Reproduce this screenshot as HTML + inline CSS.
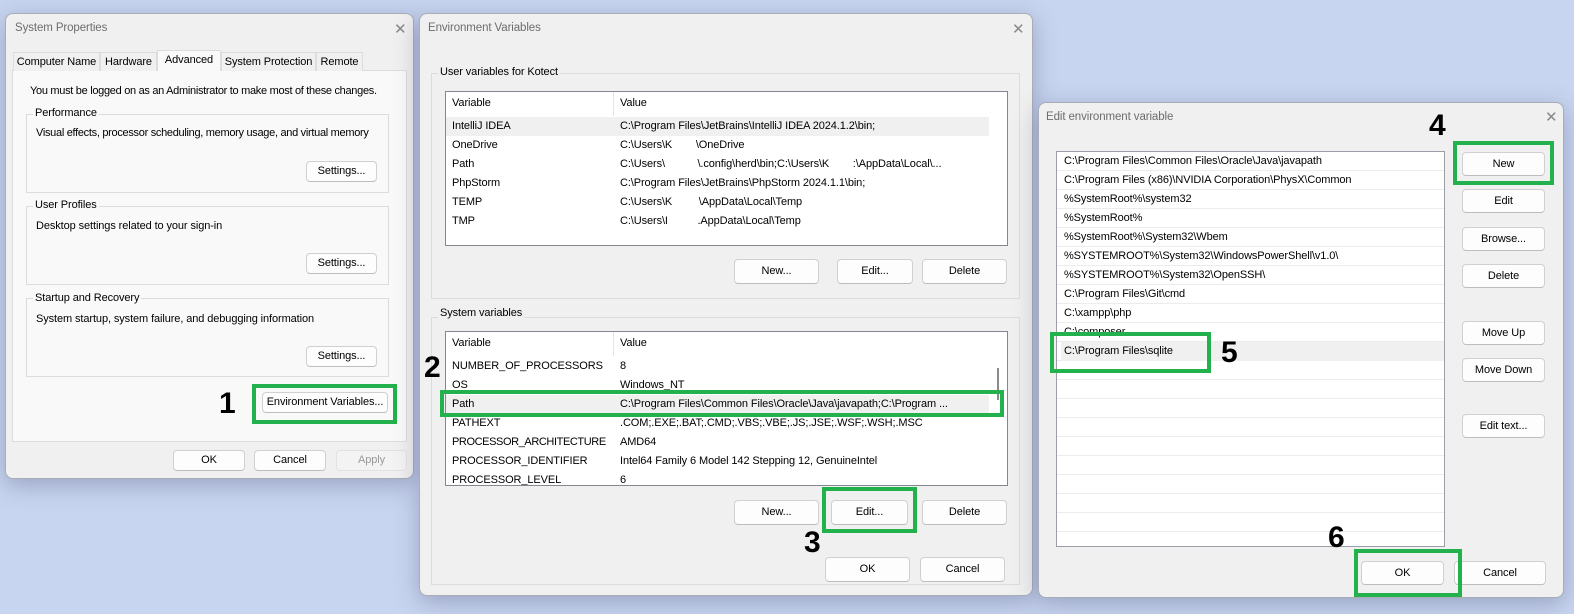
<!DOCTYPE html>
<html><head><meta charset="utf-8"><style>
*{box-sizing:border-box;margin:0;padding:0}
body{width:1574px;height:614px;background:#c8d5f0;position:relative;overflow:hidden;font-family:"Liberation Sans",sans-serif;font-size:11px;letter-spacing:-0.1px;color:#000}
.a{position:absolute;white-space:nowrap}
.win{position:absolute;background:#f0f0f0;border:1px solid #a8adb8;border-radius:8px;box-shadow:0 6px 24px rgba(60,70,110,.35)}
.title{position:absolute;color:#6d6d6d;font-size:11.5px}
.x{position:absolute;color:#888;font-size:15px;line-height:15px}
.btn{position:absolute;background:#fdfdfd;border:1px solid #d0d0d0;border-bottom-color:#bdbdbd;border-radius:4px;text-align:center;font-size:11px;white-space:nowrap}
.grp{position:absolute;border:1px solid #dcdcdc}
.lbl{position:absolute;background:#f0f0f0;padding:0 2px;font-size:11px;white-space:nowrap}
.list{position:absolute;background:#fff;border:1px solid #828790}
.g{position:absolute;border:4px solid #22b14c}
.n{position:absolute;font-weight:bold;font-size:30px;line-height:30px}
.row{position:absolute;left:0;right:0;height:19px;line-height:19px;white-space:nowrap}
.tab{position:absolute;height:19px;border:1px solid #dcdcdc;border-bottom:none;line-height:18px;background:#f0f0f0;text-align:center;white-space:nowrap}
</style></head><body>

<!-- Window 1 -->
<div class="win" style="left:5px;top:13px;width:409px;height:466px">
  <div class="title" style="left:9px;top:8px">System Properties</div>
  <div class="x" style="left:388px;top:8px">✕</div>
</div>
<div class="a" style="left:12px;top:70px;width:395px;height:372px;background:#f9f9f9;border:1px solid #dcdcdc"></div>
<div class="tab" style="left:13px;top:52px;width:87px">Computer Name</div>
<div class="tab" style="left:100px;top:52px;width:57px">Hardware</div>
<div class="tab" style="left:157px;top:50px;width:64px;height:21px;background:#f9f9f9">Advanced</div>
<div class="tab" style="left:221px;top:52px;width:95px">System Protection</div>
<div class="tab" style="left:316px;top:52px;width:47px">Remote</div>
<div class="a" style="left:30px;top:85px;letter-spacing:-0.3px">You must be logged on as an Administrator to make most of these changes.</div>
<div class="grp" style="left:26px;top:114px;width:363px;height:79px"></div>
<div class="lbl" style="left:33px;top:107px;background:#f9f9f9">Performance</div>
<div class="a" style="left:36px;top:127px;letter-spacing:-0.3px">Visual effects, processor scheduling, memory usage, and virtual memory</div>
<div class="btn" style="left:306px;top:161px;width:71px;height:21px;line-height:19px">Settings...</div>
<div class="grp" style="left:26px;top:206px;width:363px;height:79px"></div>
<div class="lbl" style="left:33px;top:199px;background:#f9f9f9">User Profiles</div>
<div class="a" style="left:36px;top:220px">Desktop settings related to your sign-in</div>
<div class="btn" style="left:306px;top:253px;width:71px;height:21px;line-height:19px">Settings...</div>
<div class="grp" style="left:26px;top:298px;width:363px;height:79px"></div>
<div class="lbl" style="left:33px;top:292px;background:#f9f9f9">Startup and Recovery</div>
<div class="a" style="left:36px;top:313px">System startup, system failure, and debugging information</div>
<div class="btn" style="left:306px;top:346px;width:71px;height:21px;line-height:19px">Settings...</div>
<div class="btn" style="left:262px;top:392px;width:126px;height:21px;line-height:19px">Environment Variables...</div>
<div class="g" style="left:252px;top:384px;width:145px;height:40px"></div>
<div class="n" style="left:219px;top:389px">1</div>
<div class="btn" style="left:173px;top:450px;width:72px;height:21px;line-height:19px">OK</div>
<div class="btn" style="left:254px;top:450px;width:72px;height:21px;line-height:19px">Cancel</div>
<div class="btn" style="left:336px;top:450px;width:71px;height:21px;line-height:19px;background:#f3f3f3;border-color:#e2e2e2;color:#999">Apply</div>

<!-- Window 2 -->
<div class="win" style="left:419px;top:13px;width:614px;height:583px">
  <div class="title" style="left:8px;top:8px">Environment Variables</div>
  <div class="x" style="left:592px;top:8px">✕</div>
</div>
<div class="grp" style="left:431px;top:73px;width:589px;height:226px"></div>
<div class="lbl" style="left:438px;top:66px">User variables for Kotect</div>
<div class="list" style="left:445px;top:91px;width:563px;height:155px">
  <div class="a" style="left:167px;top:0;width:1px;height:24px;background:#e5e5e5"></div>
  <div class="row" style="top:2px;padding-left:6px">Variable<span class="a" style="left:174px">Value</span></div>
  <div class="row" style="top:25px;right:18px;background:#f0f0f0;padding-left:6px">IntelliJ IDEA<span class="a" style="left:174px">C:\Program Files\JetBrains\IntelliJ IDEA 2024.1.2\bin;</span></div>
  <div class="row" style="top:44px;padding-left:6px">OneDrive<span class="a" style="left:174px">C:\Users\K&nbsp;&nbsp;&nbsp;&nbsp;&nbsp;&nbsp;&nbsp;&nbsp;\OneDrive</span></div>
  <div class="row" style="top:63px;padding-left:6px">Path<span class="a" style="left:174px">C:\Users\&nbsp;&nbsp;&nbsp;&nbsp;&nbsp;&nbsp;&nbsp;&nbsp;&nbsp;&nbsp;&nbsp;\.config\herd\bin;C:\Users\K&nbsp;&nbsp;&nbsp;&nbsp;&nbsp;&nbsp;&nbsp;&nbsp;:\AppData\Local\...</span></div>
  <div class="row" style="top:82px;padding-left:6px">PhpStorm<span class="a" style="left:174px">C:\Program Files\JetBrains\PhpStorm 2024.1.1\bin;</span></div>
  <div class="row" style="top:101px;padding-left:6px">TEMP<span class="a" style="left:174px">C:\Users\K&nbsp;&nbsp;&nbsp;&nbsp;&nbsp;&nbsp;&nbsp;&nbsp;&nbsp;\AppData\Local\Temp</span></div>
  <div class="row" style="top:120px;padding-left:6px">TMP<span class="a" style="left:174px">C:\Users\I&nbsp;&nbsp;&nbsp;&nbsp;&nbsp;&nbsp;&nbsp;&nbsp;&nbsp;&nbsp;.AppData\Local\Temp</span></div>
</div>
<div class="btn" style="left:734px;top:259px;width:85px;height:25px;line-height:23px">New...</div>
<div class="btn" style="left:837px;top:259px;width:76px;height:25px;line-height:23px">Edit...</div>
<div class="btn" style="left:922px;top:259px;width:85px;height:25px;line-height:23px">Delete</div>

<div class="grp" style="left:431px;top:317px;width:589px;height:268px"></div>
<div class="lbl" style="left:438px;top:307px">System variables</div>
<div class="list" style="left:445px;top:331px;width:563px;height:155px;overflow:hidden">
  <div class="a" style="left:167px;top:0;width:1px;height:24px;background:#e5e5e5"></div>
  <div class="row" style="top:2px;padding-left:6px">Variable<span class="a" style="left:174px">Value</span></div>
  <div class="row" style="top:25px;padding-left:6px">NUMBER_OF_PROCESSORS<span class="a" style="left:174px">8</span></div>
  <div class="row" style="top:44px;padding-left:6px">OS<span class="a" style="left:174px">Windows_NT</span></div>
  <div class="row" style="top:63px;right:18px;background:#f0f0f0;padding-left:6px">Path<span class="a" style="left:174px">C:\Program Files\Common Files\Oracle\Java\javapath;C:\Program ...</span></div>
  <div class="row" style="top:82px;padding-left:6px">PATHEXT<span class="a" style="left:174px">.COM;.EXE;.BAT;.CMD;.VBS;.VBE;.JS;.JSE;.WSF;.WSH;.MSC</span></div>
  <div class="row" style="top:101px;padding-left:6px;letter-spacing:-0.4px">PROCESSOR_ARCHITECTURE<span class="a" style="left:174px;letter-spacing:-0.1px">AMD64</span></div>
  <div class="row" style="top:120px;padding-left:6px">PROCESSOR_IDENTIFIER<span class="a" style="left:174px">Intel64 Family 6 Model 142 Stepping 12, GenuineIntel</span></div>
  <div class="row" style="top:139px;padding-left:6px">PROCESSOR_LEVEL<span class="a" style="left:174px">6</span></div>
  <div class="a" style="left:551px;top:36px;width:2px;height:32px;background:#8a8a8a"></div>
</div>
<div class="g" style="left:440px;top:390px;width:564px;height:27px"></div>
<div class="n" style="left:424px;top:353px">2</div>
<div class="btn" style="left:734px;top:500px;width:85px;height:25px;line-height:23px">New...</div>
<div class="btn" style="left:831px;top:500px;width:77px;height:25px;line-height:23px">Edit...</div>
<div class="btn" style="left:922px;top:500px;width:85px;height:25px;line-height:23px">Delete</div>
<div class="g" style="left:822px;top:487px;width:95px;height:46px"></div>
<div class="n" style="left:804px;top:528px">3</div>
<div class="btn" style="left:825px;top:557px;width:85px;height:25px;line-height:23px">OK</div>
<div class="btn" style="left:920px;top:557px;width:85px;height:25px;line-height:23px">Cancel</div>

<!-- Window 3 -->
<div class="win" style="left:1038px;top:102px;width:526px;height:496px">
  <div class="title" style="left:7px;top:8px">Edit environment variable</div>
  <div class="x" style="left:506px;top:7px">✕</div>
</div>
<div class="list" style="left:1056px;top:151px;width:389px;height:396px;overflow:hidden;border-color:#9a9ea6">
  <div style="position:absolute;left:0;right:0;top:0;height:400px;background:repeating-linear-gradient(#fff 0,#fff 18px,#ececec 18px,#ececec 19px)"></div>
  <div class="row" style="top:190px;left:4px;background:#f0f0f0"></div>
  <div class="row" style="top:0;padding-left:7px">C:\Program Files\Common Files\Oracle\Java\javapath</div>
  <div class="row" style="top:19px;padding-left:7px">C:\Program Files (x86)\NVIDIA Corporation\PhysX\Common</div>
  <div class="row" style="top:38px;padding-left:7px">%SystemRoot%\system32</div>
  <div class="row" style="top:57px;padding-left:7px">%SystemRoot%</div>
  <div class="row" style="top:76px;padding-left:7px">%SystemRoot%\System32\Wbem</div>
  <div class="row" style="top:95px;padding-left:7px">%SYSTEMROOT%\System32\WindowsPowerShell\v1.0\</div>
  <div class="row" style="top:114px;padding-left:7px">%SYSTEMROOT%\System32\OpenSSH\</div>
  <div class="row" style="top:133px;padding-left:7px">C:\Program Files\Git\cmd</div>
  <div class="row" style="top:152px;padding-left:7px">C:\xampp\php</div>
  <div class="row" style="top:171px;padding-left:7px">C:\composer</div>
  <div class="row" style="top:190px;padding-left:7px">C:\Program Files\sqlite</div>
</div>
<div class="g" style="left:1050px;top:332px;width:161px;height:41px"></div>
<div class="n" style="left:1221px;top:338px">5</div>
<div class="btn" style="left:1462px;top:152px;width:83px;height:24px;line-height:22px">New</div>
<div class="g" style="left:1453px;top:141px;width:101px;height:44px"></div>
<div class="n" style="left:1429px;top:111px">4</div>
<div class="btn" style="left:1462px;top:189px;width:83px;height:24px;line-height:22px">Edit</div>
<div class="btn" style="left:1462px;top:227px;width:83px;height:24px;line-height:22px">Browse...</div>
<div class="btn" style="left:1462px;top:264px;width:83px;height:24px;line-height:22px">Delete</div>
<div class="btn" style="left:1462px;top:321px;width:83px;height:24px;line-height:22px">Move Up</div>
<div class="btn" style="left:1462px;top:358px;width:83px;height:24px;line-height:22px">Move Down</div>
<div class="btn" style="left:1462px;top:414px;width:83px;height:24px;line-height:22px">Edit text...</div>
<div class="btn" style="left:1361px;top:561px;width:83px;height:24px;line-height:22px">OK</div>
<div class="btn" style="left:1454px;top:561px;width:92px;height:24px;line-height:22px">Cancel</div>
<div class="g" style="left:1354px;top:549px;width:108px;height:48px"></div>
<div class="n" style="left:1328px;top:523px">6</div>
</body></html>
